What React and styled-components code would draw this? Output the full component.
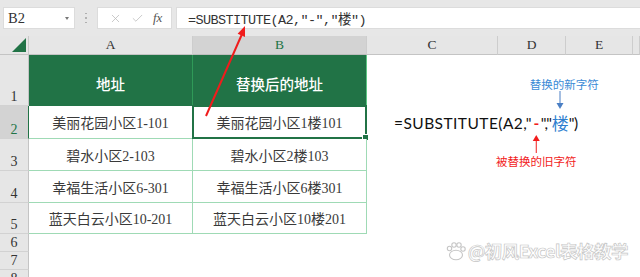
import React from 'react';
import styled, { createGlobalStyle } from 'styled-components';
import { X, Check } from 'lucide-react';

const SERIF = `"Liberation Serif", "Noto Sans CJK SC", serif`;
const GREEN = '#217346';
const MINT = '#9fdab5';

const GlobalStyle = createGlobalStyle`
  html, body {
    margin: 0;
    padding: 0;
    background: #fff;
  }
  #root {
    width: 640px;
  }
`;

const Page = styled.div`
  position: relative;
  width: 640px;
  height: 277px;
  overflow: hidden;
  display: flex;
  flex-direction: column;
  background: #fff;
  font-family: ${SERIF};
  color: #333;
`;

const Toolbar = styled.div`
  height: 36px;
  flex-shrink: 0;
  display: flex;
  align-items: center;
  padding-left: 3px;
  background: #e7e7e7;
  box-sizing: border-box;
`;

const NameBox = styled.div`
  width: 72px;
  height: 22px;
  box-sizing: border-box;
  background: #fff;
  border: 1px solid #dcdcdc;
  display: flex;
  align-items: center;
  justify-content: space-between;
  padding: 0 4px 0 4px;
  font-size: 14.5px;
  color: #333;
`;

const Caret = styled.span`
  width: 0;
  height: 0;
  border-left: 2.5px solid transparent;
  border-right: 2.5px solid transparent;
  border-top: 3px solid #777;
  margin-right: 1px;
`;

const Grip = styled.div`
  width: 22px;
  display: flex;
  flex-direction: column;
  align-items: center;
  gap: 3px;

  span {
    width: 1.5px;
    height: 1.5px;
    border-radius: 50%;
    background: #a8a8a8;
  }
`;

const FuncBox = styled.div`
  width: 75px;
  height: 22px;
  box-sizing: border-box;
  background: #fff;
  border: 1px solid #dcdcdc;
  display: flex;
  align-items: center;
  justify-content: space-around;
  padding: 0 4px 0 6px;
  color: #b9b9b9;
`;

const Fx = styled.span`
  font-family: "Liberation Serif", serif;
  font-style: italic;
  font-size: 13px;
  color: #555;
`;

const FormulaInput = styled.div`
  flex: 1;
  margin-left: 4px;
  height: 22px;
  box-sizing: border-box;
  background: #fff;
  border: 1px solid #dcdcdc;
  border-right: none;
  display: flex;
  align-items: center;
  padding-left: 11px;
  font-family: "Liberation Mono", "Noto Sans CJK SC", monospace;
  font-size: 13.5px;
  letter-spacing: -0.6px;
  color: #333;
`;

const Sheet = styled.div`
  flex: 1;
  display: grid;
  grid-template-columns: 29px 164px 174px 131px 68px 67px 1fr;
  grid-template-rows: 19px 51px 33px 32px 32px 31px 18px 18px 18px;
  overflow: hidden;
`;

const Corner = styled.div`
  position: relative;
  background: #e6e6e6;
  border-right: 1px solid #c9c9c9;
  border-bottom: 1px solid #c4c4c4;
  box-sizing: border-box;

  &::after {
    content: '';
    position: absolute;
    right: 2px;
    bottom: 2px;
    width: 0;
    height: 0;
    border-left: 14px solid transparent;
    border-bottom: 14px solid ${GREEN};
  }
`;

const ColHead = styled.div`
  background: ${(p) => (p.$selected ? '#d3d3d3' : '#e6e6e6')};
  color: ${(p) => (p.$selected ? GREEN : '#333')};
  border-right: 1px solid #cdcdcd;
  border-bottom: 1px solid ${(p) => (p.$selected ? '#bdbdbd' : '#c4c4c4')};
  box-sizing: border-box;
  display: flex;
  align-items: center;
  justify-content: center;
  font-size: 13.5px;
`;

const RowHead = styled.div`
  background: ${(p) => (p.$selected ? '#d3d3d3' : '#e6e6e6')};
  color: ${(p) => (p.$selected ? GREEN : '#333')};
  border-right: 1px solid ${(p) => (p.$selected ? GREEN : '#c4c4c4')};
  border-bottom: 1px solid #d2d2d2;
  box-sizing: border-box;
  display: flex;
  align-items: flex-end;
  justify-content: center;
  font-size: 14px;
  line-height: 17px;
`;

const Cell = styled.div`
  position: relative;
  box-sizing: border-box;
  display: flex;
  align-items: center;
  justify-content: center;
  white-space: nowrap;
  font-size: 14px;
  background: #fff;
  color: #3a3a3a;
  border-right: 1px solid ${MINT};
  border-bottom: 1px solid ${MINT};
`;

const HeadCell = styled(Cell)`
  background: ${GREEN};
  color: #fff;
  font-weight: 500;
  font-size: 14.5px;
  padding-top: 5px;
  border-bottom: none;
  border-right: 1px solid ${(p) => (p.$last ? '#5cc783' : '#2f9a58')};
`;

const Selection = styled.span`
  position: absolute;
  inset: -1px -1px -1px -1px;
  border: 2px solid ${GREEN};
  pointer-events: none;

  &::after {
    content: '';
    position: absolute;
    right: -4px;
    bottom: -4px;
    width: 5px;
    height: 5px;
    background: ${GREEN};
    border: 1px solid #fff;
  }
`;

const Empty = styled.div`
  background: #fff;
`;

const Annotation = styled.div`
  grid-column: span 3;
  display: flex;
  align-items: center;
  padding-left: 27px;
  position: relative;
  z-index: 2;
`;

const Formula = styled.div`
  font-family: Lato, "Noto Sans CJK SC", sans-serif;
  font-size: 15.5px;
  color: #111;
  white-space: nowrap;
  display: flex;
  align-items: center;
`;

const Piece = styled.span`
  letter-spacing: ${(p) => p.$track || 0}px;
`;

const Mark = styled.span`
  position: relative;
  color: ${(p) => p.$color};
  font-size: ${(p) => p.$size || 15.5}px;
  font-weight: ${(p) => p.$weight || 400};
  margin: 0 ${(p) => p.$gap || 0}px;
`;

const Callout = styled.span`
  position: absolute;
  left: 50%;
  transform: translateX(-50%);
  display: flex;
  flex-direction: column;
  align-items: center;
  ${(p) => (p.$up ? 'bottom: calc(100% + 1px);' : 'top: calc(100% + 3px);')}
`;

const CalloutLabel = styled.span`
  font-family: "Noto Sans CJK SC", sans-serif;
  font-size: 11.5px;
  font-weight: 400;
  line-height: 14px;
  color: ${(p) => p.$color};
  white-space: nowrap;
  margin-left: ${(p) => p.$shift || 0}px;
  margin-top: ${(p) => (p.$below ? 1 : 0)}px;
`;

const Overlay = styled.svg`
  position: absolute;
  left: 0;
  top: 0;
  pointer-events: none;
`;

const Watermark = styled.div`
  position: absolute;
  right: 12px;
  bottom: 14px;
  display: flex;
  align-items: center;
  gap: 1px;
  font-family: "Noto Sans CJK SC", sans-serif;
  font-size: 17.5px;
  font-weight: 700;
  color: rgba(255, 255, 255, 0.95);
  -webkit-text-stroke: 0.7px #c6c6c6;
  letter-spacing: -0.5px;
`;

const rows = [
  { n: 1, a: '地址', b: '替换后的地址', head: true },
  { n: 2, a: '美丽花园小区1-101', b: '美丽花园小区1楼101' },
  { n: 3, a: '碧水小区2-103', b: '碧水小区2楼103' },
  { n: 4, a: '幸福生活小区6-301', b: '幸福生活小区6楼301' },
  { n: 5, a: '蓝天白云小区10-201', b: '蓝天白云小区10楼201' },
];

const cols = ['A', 'B', 'C', 'D', 'E', ''];

function Arrow({ up, color }) {
  return (
    <svg width="9" height="18" viewBox="0 0 9 18">
      {up ? (
        <>
          <polygon points="4.5,0 8,6 1,6" fill={color} />
          <line x1="4.5" y1="5" x2="4.5" y2="18" stroke={color} strokeWidth="1" />
        </>
      ) : (
        <>
          <line x1="4.5" y1="0" x2="4.5" y2="13" stroke={color} strokeWidth="1" />
          <polygon points="1,12 8,12 4.5,18" fill={color} />
        </>
      )}
    </svg>
  );
}

function FormulaNote() {
  return (
    <Annotation>
      <Formula>
        <Piece $track={0.45}>{'=SUBSTITUTE(A2,"'}</Piece>
        <Mark $color="#f21c1c" $weight={700} $gap={1.5}>
          -
          <Callout>
            <Arrow up color="#f21c1c" />
            <CalloutLabel $color="#f21c1c" $below>被替换的旧字符</CalloutLabel>
          </Callout>
        </Mark>
        <Piece $track={-0.3}>{'","'}</Piece>
        <Mark $color="#2f7fcf" $size={17}>
          楼
          <Callout $up>
            <CalloutLabel $color="#3a8ad6" $shift={8}>替换的新字符</CalloutLabel>
            <Arrow color="#4a7fc4" />
          </Callout>
        </Mark>
        <Piece $track={-0.3}>{'")'}</Piece>
      </Formula>
    </Annotation>
  );
}

function Paw() {
  return (
    <svg width="22" height="22" viewBox="0 0 22 22">
      <g fill="#fff" stroke="#c6c6c6" strokeWidth="1.1">
        <ellipse cx="11" cy="15" rx="6.5" ry="4.8" />
        <circle cx="4.5" cy="8.5" r="2.2" />
        <circle cx="9" cy="5" r="2.2" />
        <circle cx="14" cy="5" r="2.2" />
        <circle cx="18" cy="9" r="2.2" />
      </g>
    </svg>
  );
}

export default function App() {
  return (
    <Page>
      <GlobalStyle />
      <Toolbar>
        <NameBox>
          B2
          <Caret />
        </NameBox>
        <Grip>
          <span />
          <span />
          <span />
        </Grip>
        <FuncBox>
          <X size={13} strokeWidth={1.4} />
          <Check size={13} strokeWidth={1.4} />
          <Fx>fx</Fx>
        </FuncBox>
        <FormulaInput>=SUBSTITUTE(A2,"-","楼")</FormulaInput>
      </Toolbar>

      <Sheet>
        <Corner />
        {cols.map((c) => (
          <ColHead key={c || 'F'} $selected={c === 'B'}>
            {c}
          </ColHead>
        ))}

        {rows.map((r) => (
          <React.Fragment key={r.n}>
            <RowHead $selected={r.n === 2}>{r.n}</RowHead>
            {r.head ? (
              <>
                <HeadCell>{r.a}</HeadCell>
                <HeadCell $last>{r.b}</HeadCell>
              </>
            ) : (
              <>
                <Cell>{r.a}</Cell>
                <Cell>
                  {r.b}
                  {r.n === 2 && <Selection />}
                </Cell>
              </>
            )}
            {r.n === 2 ? (
              <FormulaNote />
            ) : (
              <>
                <Empty />
                <Empty />
                <Empty />
              </>
            )}
            <Empty />
          </React.Fragment>
        ))}

        {[6, 7, 8].map((n) => (
          <React.Fragment key={n}>
            <RowHead>{n}</RowHead>
            {cols.map((c) => (
              <Empty key={c || 'F'} />
            ))}
          </React.Fragment>
        ))}
      </Sheet>

      <Overlay width="640" height="277" viewBox="0 0 640 277">
        <line x1="206" y1="116" x2="241.6" y2="35" stroke="#f01c1c" strokeWidth="2" />
        <polygon points="245,26 245,37 237.6,33.8" fill="#f01c1c" />
      </Overlay>

      <Watermark>
        <Paw />
        @初风Excel表格教学
      </Watermark>
    </Page>
  );
}
